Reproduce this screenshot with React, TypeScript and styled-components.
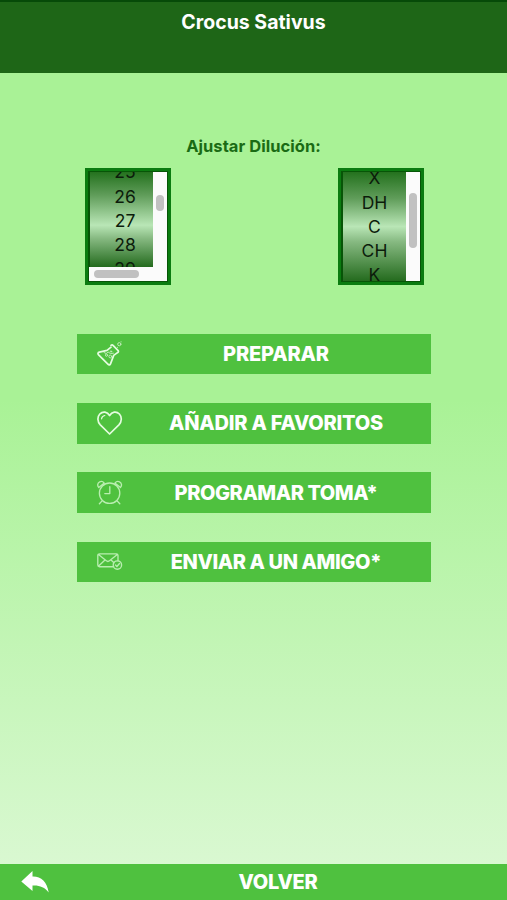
import React from 'react';
import styled, { createGlobalStyle } from 'styled-components';

const GlobalStyle = createGlobalStyle`
  *, *::before, *::after { box-sizing: border-box; }
  body { margin: 0; font-family: Inter, 'Liberation Sans', sans-serif; }
`;

const Screen = styled.div`
  display: flex;
  flex-direction: column;
  height: 900px;
  overflow: hidden;
  background: linear-gradient(#a9f296 0, #a9f296 400px, #d9f8d1 864px);
`;

const Header = styled.header`
  flex: none;
  height: 72.5px;
  padding-top: 7px;
  border-top: 2px solid #064a08;
  background: #1e6617;
`;

const Title = styled.h1`
  margin: 0;
  text-align: center;
  color: #fff;
  font-size: 19.5px;
  line-height: 26px;
  font-weight: 700;
  letter-spacing: 0;
`;

const Content = styled.main`
  flex: 1;
  display: flex;
  flex-direction: column;
  align-items: center;
`;

const Label = styled.p`
  margin: 63.5px 0 0;
  color: #1a6b14;
  font-size: 16.5px;
  line-height: 20px;
  font-weight: 700;
  letter-spacing: 0.05px;
`;

const Wheels = styled.div`
  display: flex;
  justify-content: space-between;
  width: 339px;
  margin: 12px 0 49px 2px;
`;

const Wheel = styled.div`
  display: grid;
  grid-template-columns: 1fr 14px;
  grid-template-rows: 1fr auto;
  width: 86px;
  height: 117px;
  padding: 1px;
  border: 3px solid #0b7c10;
  background: #075507;
`;

const Values = styled.div<{ $shift: number; $center: number }>`
  overflow: hidden;
  min-height: 0;
  margin-left: 1px;
  background: linear-gradient(
    #24721e 0%,
    #5f9c59 24%,
    #b9e6b6 ${(p) => p.$center}%,
    #86b981 ${(p) => p.$center + 14}%,
    #246b1e 100%
  );

  > div { margin-top: ${(p) => p.$shift}px; }
`;

const Value = styled.div`
  height: 24.3px;
  padding-left: 7px;
  text-align: center;
  color: #0c1c0b;
  font-size: 17.5px;
  line-height: 24px;
`;

const PlainValue = styled(Value)`
  padding-left: 0;
`;

const Track = styled.div`
  background: #fbfbfb;
`;

const BottomTrack = styled(Track)`
  grid-column: 1 / 3;
  height: 14px;
  padding: 3px 0 0 5px;
`;

const Thumb = styled.div<{ $top: number; $length: number }>`
  width: 8px;
  height: ${(p) => p.$length}px;
  margin: ${(p) => p.$top}px 0 0 3px;
  border-radius: 4px;
  background: #c1c1c1;
`;

const BottomThumb = styled.div`
  width: 45px;
  height: 8px;
  border-radius: 4px;
  background: #c1c1c1;
`;

const Actions = styled.div`
  display: flex;
  flex-direction: column;
  gap: 28.8px;
  width: 354px;
`;

const Action = styled.button`
  display: flex;
  align-items: center;
  height: 40.4px;
  padding: 0 0 0 20px;
  border: 0;
  background: #4fc13f;
  color: #fff;
  font-family: inherit;
`;

const ActionText = styled.span<{ $spacing: number }>`
  flex: 1;
  padding: 0 1px 0 0;
  text-align: center;
  font-size: 20px;
  line-height: 26px;
  font-weight: 800;
  letter-spacing: ${(p) => p.$spacing}px;
`;

const Icon = styled.svg<{ $faint?: boolean }>`
  flex: none;
  width: 26px;
  height: 26px;
  fill: none;
  stroke: ${(p) => (p.$faint ? '#b9eeb0' : '#e5fce0')};
  stroke-width: ${(p) => (p.$faint ? 1.35 : 1.7)};
  stroke-linecap: round;
  stroke-linejoin: round;
`;

const Footer = styled.footer`
  flex: none;
  display: flex;
  align-items: center;
  height: 36px;
  padding-left: 21px;
  background: #4fc13f;
`;

const BackArrow = styled.svg`
  flex: none;
  width: 28px;
  height: 24px;
  fill: #fff;
`;

const FooterText = styled.span`
  flex: 1;
  text-align: center;
  color: #fff;
  font-size: 20px;
  font-weight: 800;
  letter-spacing: -0.25px;
`;

const FlaskIcon = () => (
  <Icon viewBox="0 0 26 26">
    <path d="m14 6.2-4 3.2-7.6 1.8c-1.6.4-1.9 1.5-.8 2.6l9.3 9.4c1.1 1.1 2.2.8 2.7-.6l3.1-8.2 3.8-2.8" />
    <path d="M14 4.4c.8-.7 1.6-.5 2.3.2l4.6 4.7c.7.7.8 1.4 0 2.1" />
    <g strokeWidth="1" opacity=".75">
      <path d="m7 11.5 2.2 1 2-1.4 2.2 1.4 3-.3" />
      <circle cx="9.5" cy="14.2" r="1.1" />
      <circle cx="13.3" cy="15.5" r="1.4" />
      <circle cx="14" cy="10.5" r=".7" />
      <circle cx="22.3" cy="3.2" r="1.6" />
      <path d="M24 .8h.1M20.5 6.4h.1" />
    </g>
  </Icon>
);

const HeartIcon = () => (
  <Icon viewBox="0 0 26 26">
    <path d="M12.6 24 3.3 14.8C.2 11.5.2 6.8 2.8 4c3-3 7.5-2.4 9.8 1.5 2.3-3.9 6.8-4.5 9.8-1.5 2.6 2.8 2.6 7.5-.5 10.8z" />
    <path d="M4.6 8.8c.2-1.8 1.4-3 3.2-3.3" strokeWidth="1.2" />
  </Icon>
);

const ClockIcon = () => (
  <Icon viewBox="0 0 26 26" $faint>
    <circle cx="12.6" cy="13.2" r="10.2" />
    <path d="M12.8 6.7v6.9h-5M5.1 20.9l-2.7 2.9M20.1 20.9l2.7 2.9" />
    <path d="M1.8 7.5C0 5.6.5 2.8 2.7 1.8c1.6-.7 3.4-.2 4.6 1.3M23.4 7.5c1.8-1.9 1.3-4.7-.9-5.7-1.6-.7-3.4-.2-4.6 1.3M2.6 6.8 7 3.4M22.6 6.8l-4.4-3.4" />
  </Icon>
);

const MailIcon = () => (
  <Icon viewBox="0 0 26 26" $faint>
    <path d="M16.6 17.7H2.5a1.7 1.7 0 0 1-1.7-1.7V6.5a1.7 1.7 0 0 1 1.7-1.7h16.8A1.7 1.7 0 0 1 21 6.5v5.2M1.5 5.4l7.8 6.4c1 .8 2.2.8 3.2 0l7.8-6.4M1.6 17l6.4-6M14 11l3 2.7" />
    <circle cx="20.4" cy="16" r="4.2" />
    <path d="m18.5 16 1.4 1.5 2.6-3" />
  </Icon>
);

export default function App() {
  return (
    <Screen>
      <GlobalStyle />
      <Header>
        <Title>Crocus Sativus</Title>
      </Header>
      <Content>
        <Label>Ajustar Dilución:</Label>
        <Wheels>
          <Wheel>
            <Values $shift={-11.8} $center={56}>
              <div>
                {[25, 26, 27, 28, 29].map((n) => <Value key={n}>{n}</Value>)}
              </div>
            </Values>
            <Track><Thumb $top={23} $length={16} /></Track>
            <BottomTrack><BottomThumb /></BottomTrack>
          </Wheel>
          <Wheel>
            <Values $shift={-5.8} $center={50}>
              <div>
                {['X', 'DH', 'C', 'CH', 'K'].map((n) => <PlainValue key={n}>{n}</PlainValue>)}
              </div>
            </Values>
            <Track><Thumb $top={21} $length={55} /></Track>
          </Wheel>
        </Wheels>
        <Actions>
          <Action><FlaskIcon /><ActionText $spacing={-0.15}>PREPARAR</ActionText></Action>
          <Action><HeartIcon /><ActionText $spacing={-0.22}>AÑADIR A FAVORITOS</ActionText></Action>
          <Action><ClockIcon /><ActionText $spacing={-0.45}>PROGRAMAR TOMA*</ActionText></Action>
          <Action><MailIcon /><ActionText $spacing={-0.4}>ENVIAR A UN AMIGO*</ActionText></Action>
        </Actions>
      </Content>
      <Footer>
        <BackArrow viewBox="0 0 28 24">
          <path d="M.3 11.5 11.5 1v5.5C20 6.2 26 11.5 27.7 22.5 23.5 17 18.5 15.1 11.5 15.5V21z" />
        </BackArrow>
        <FooterText>VOLVER</FooterText>
      </Footer>
    </Screen>
  );
}
